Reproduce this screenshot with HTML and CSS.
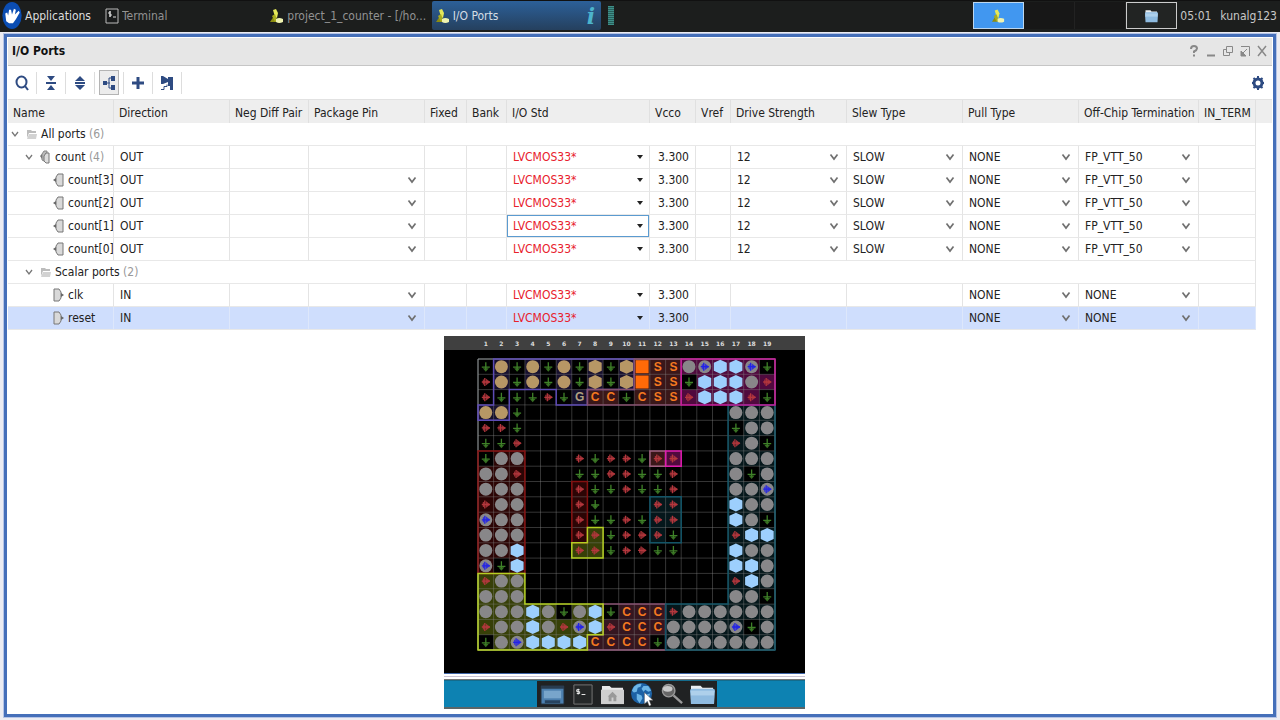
FILE: index.html
```html
<!DOCTYPE html>
<html lang="en">
<head>
<meta charset="utf-8">
<meta name="viewport" content="width=device-width, initial-scale=1">
<title>I/O Ports</title>
<link rel="stylesheet" href="styles.css">
</head>
<body>
<svg class="sprite" aria-hidden="true">
  <symbol id="leaf" viewBox="0 0 16 16"><path d="M1 14 5 8l3 6z" fill="#8b8c12"/><path d="M4 2 7 1l2 4-1 5-2-1z" fill="#e4e85a"/><path d="m3 8 3-2 2 6-2 2z" fill="#a9ac1e"/><path d="M7 11q3-2 7 0v3q-4 2-7 0z" fill="#f0f3b0"/></symbol>
  <symbol id="chevron" viewBox="0 0 10 8"><path d="m1.500 1.500 3.500 4.500 3.500-4.500" fill="none" stroke="#707070" stroke-width="1.700"/></symbol>
  <symbol id="thin-chevron" viewBox="0 0 8 8"><path d="m1 2 3 4 3-4" fill="none" stroke="#777" stroke-width="1.3"/></symbol>
  <symbol id="triangle" viewBox="0 0 10 8"><path d="M2 2h6L5 6z" fill="#222"/></symbol>
  <symbol id="folder" viewBox="0 0 11 12"><path d="M1 10V2h4l1 1h4v2H3z" fill="#bcbcbc"/><path d="M3 6h8l-1 5H1z" fill="#d2d2d2"/></symbol>
  <symbol id="out" viewBox="0 0 11 14"><path d="M10 1H5L3 4v6l2 3h5z" fill="#d9d9d9" stroke="#777"/><path d="M0 7l3-2v4z" fill="#666"/></symbol>
  <symbol id="in" viewBox="0 0 11 14"><path d="M1 1h5l2 3v6l-2 3H1z" fill="#d9d9d9" stroke="#777"/><path d="M11 7 8 5v4z" fill="#666"/></symbol>
  <symbol id="bus" viewBox="0 0 11 14"><path d="M7 1H4L2 4v6l2 1h3z" fill="#bbb" stroke="#888"/><path d="M9 3H6L4 6v5l2 2h3z" fill="#ddd" stroke="#777"/><path d="m0 6 2-2v5z" fill="#777"/></symbol>
  <symbol id="bluefolder" viewBox="0 0 26 22" preserveAspectRatio="none"><path d="M1 5V2h10l2 2h11v8H1z" fill="#e9edf0"/><path d="M0 7q0-2 2-2h22q2 0 2 2l-1 14H1z" fill="#8fbbe0"/><path d="M1 7h24v5H1z" fill="#aed0eb"/></symbol>
</svg>

<header class="panel">
  <button class="apps"><svg viewBox="0 0 22 28"><ellipse cx="11" cy="14" rx="10" ry="14" fill="#0b4db2"/><path d="M5 20 4 12l2-1 1 3 1-6 2 0 1 5 2-6 2 1-1 5 4-4 1 2-4 7-3 4H8z" fill="#fff"/></svg>Applications</button>
  <nav class="tasks" aria-label="Open windows">
    <button class="task"><svg viewBox="0 0 14 16"><path d="M1 1h12v14H1z" fill="#191b1b" stroke="#bbb"/><path d="M6 4H4v2h2v2H4M5 3v6M8 9h3" fill="none" stroke="#ddd"/></svg><span>Terminal</span></button>
    <button class="task"><svg><use href="#leaf"/></svg><span>project_1_counter - [/ho...</span></button>
    <button class="task active"><svg><use href="#leaf"/></svg><span>I/O Ports</span><i>i</i></button>
  </nav>
  <span class="meter"></span>
  <div class="pager">
    <button class="desk current" aria-label="Workspace 1"><svg><use href="#leaf"/></svg></button>
    <button class="desk" aria-label="Workspace 2"></button>
    <button class="desk" aria-label="Workspace 3"></button>
    <button class="desk boxed" aria-label="Files"><svg><use href="#bluefolder"/></svg></button>
  </div>
  <time>05:01</time>
  <span class="user">kunalg123</span>
</header>

<main class="window">
  <div class="titlebar">
    <h1>I/O Ports</h1>
    <button aria-label="Help"><svg viewBox="0 0 12 12"><path d="M3 4q0-3 3-3t3 2.500q0 1.500-3 3V8M6 9.500v2" fill="none"/></svg></button>
    <button aria-label="Minimize"><svg viewBox="0 0 12 12"><path d="M2 10.500h8"/></svg></button>
    <button aria-label="Restore"><svg viewBox="0 0 12 12" class="fine"><path d="M4.500 1.500h6v6h-6zM7.500 8v2.500h-6v-6H4"/></svg></button>
    <button aria-label="Float"><svg viewBox="0 0 12 12" class="fine"><path d="M2 1.500h8.500V11M8 4 3 9"/><path d="M2 6v5h5z" class="solid"/></svg></button>
    <button aria-label="Close"><svg viewBox="0 0 12 12" class="cross"><path d="m2 1 8 10M10 1 2 11"/></svg></button>
  </div>
  <div class="toolbar">
    <div class="slot"><button aria-label="Search"><svg viewBox="0 0 16 16"><ellipse cx="7.500" cy="7" rx="5" ry="5.500" fill="none"/><path d="m11 11 3 4"/></svg></button></div>
    <div class="slot"><button aria-label="Collapse all"><svg viewBox="0 0 16 16"><path d="M3 8h10" /><path class="solid" d="M4 1h8L8 6zM4 15h8l-4-5z"/></svg></button></div>
    <div class="slot"><button aria-label="Expand all"><svg viewBox="0 0 16 16"><path d="M3 8h10"/><path class="solid" d="M3 6h10L8 1zM3 10h10l-5 5z"/></svg></button></div>
    <div class="slot"><button class="on" aria-label="Group by interface"><svg viewBox="0 0 16 16"><path class="solid" d="M2 6h4v4H2zM10 1h4v5h-4zM10 10h4v5h-4z"/><path class="thin" d="M6 8h3M11 3H8v10h3" fill="none"/></svg></button></div>
    <div class="slot"><button aria-label="Add port"><svg viewBox="0 0 16 16"><path class="heavy" d="M8 2v12M2 8h12"/></svg></button></div>
    <div class="slot"><button aria-label="Schematic"><svg viewBox="0 0 16 16"><path class="solid" d="M2 1h2l5 3V2h5v13h-3v-4H9V7L4 9H2z"/><path class="thin" d="M2 14.500h3v-3h3v-2" fill="none"/></svg></button></div>
    <button class="gear" aria-label="Settings"><svg viewBox="0 0 16 16"><circle cx="8" cy="8" r="4" fill="none" class="heavy"/><path d="M8 1v3M8 12v3M2 8h2M12 8h2M3.500 3l2 2M10.500 11l2 2M12.500 3l-2 2M5.500 11l-2 2"/></svg></button>
  </div>

  <table class="ports">
    <colgroup>
      <col class="w-name"><col class="w-wide"><col class="w-pair"><col class="w-wide"><col class="w-fixed"><col class="w-bank"><col class="w-std"><col class="w-vcco"><col class="w-vref"><col class="w-wide"><col class="w-wide"><col class="w-wide"><col class="w-term"><col class="w-in"><col>
    </colgroup>
    <thead><tr><th>Name</th><th>Direction</th><th>Neg Diff Pair</th><th>Package Pin</th><th>Fixed</th><th>Bank</th><th>I/O Std</th><th>Vcco</th><th>Vref</th><th>Drive Strength</th><th>Slew Type</th><th>Pull Type</th><th>Off-Chip Termination</th><th>IN_TERM</th><th></th></tr></thead>
    <tbody id="rows"></tbody>
  </table>

  <div class="view">
  <figure class="device">
    <svg id="map" viewBox="0 0 361 337" role="img" aria-label="Package pin map"></svg>
    <div class="edge"></div>
    <div class="desktop">
      <div class="dock">
        <button aria-label="Show desktop"><svg viewBox="0 0 26 24"><path d="M1 3h24v19H1z" fill="#4c7fae" stroke="#232e38"/><path d="M1 3h24v3H1z" fill="#293c50"/><path d="M4 8h18v8H4z" fill="#78a5cb"/><path d="M5 18h16v3H5z" fill="#27435f"/></svg></button>
        <button aria-label="Terminal"><svg viewBox="0 0 26 24"><path d="M4 2h19v20H4z" fill="#252829" stroke="#777"/><path d="M10 7H7v2h3v2H7M8.500 6v6M12 12h4" fill="none" stroke="#eee"/></svg></button>
        <button aria-label="Home"><svg viewBox="0 0 26 24"><path d="M2 7V3h8l2 2h12v6H2z" fill="#e8e8e8"/><path d="M1 7h24v15H1z" fill="#cfcfcf"/><path d="m8 14 5-5 5 5h-1v5h-3v-4h-2v4H9v-5z" fill="#999"/></svg></button>
        <button aria-label="Web browser"><svg viewBox="0 0 26 24"><circle cx="12" cy="11" r="11" fill="#1d62a5"/><path d="M4 4q4-4 8-3l-1 3-3 1-1 4-3 1-2-2zM14 3l5 0 3 5-3 1-3-2-2 2-2-3zM7 11l5 2 1 3-3 5-3-4zM17 12l4-1-2 6-3 1z" fill="#6db6e6"/><path d="M15 10v12l3-3 2 5 2-1-2-5h4z" fill="#fff" stroke="#555" stroke-width=".5"/></svg></button>
        <button aria-label="Find"><svg viewBox="0 0 26 24"><path d="m14 13 9 8" stroke="#999" stroke-width="2.500"/><circle cx="9" cy="8" r="6.500" fill="#666" stroke="#999" stroke-width="1.500"/><ellipse cx="8" cy="6" rx="5" ry="3" fill="#c9c9c9"/></svg></button>
        <button aria-label="Files"><svg viewBox="0 0 26 22"><use href="#bluefolder"/></svg></button>
      </div>
    </div>
  </figure>
  </div>
</main>
<script src="app.js"></script>
</body>
</html>
```
FILE: styles.css
```css
* { box-sizing: border-box; }
body {
  margin: 0;
  min-height: 100vh;
  display: flex;
  flex-direction: column;
  background: #ececf2;
  color: #222;
  font: 12px/16px "DejaVu Sans Condensed", "DejaVu Sans", sans-serif;
}
button, select { font: inherit; color: inherit; border: 0; background: none; padding: 0; margin: 0; }
button { display: flex; align-items: center; justify-content: center; }
.sprite { position: absolute; width: 0; height: 0; }

/* Desktop panel */
.panel {
  display: flex;
  align-items: center;
  height: 32px;
  padding: 0 3px 2px 1px;
  background: #1c1e1d;
  border-top: 1px solid #111;
  color: #c8c8c8;
}
.apps { gap: 2px; width: 100px; justify-content: flex-start; color: #ddd; }
.apps svg { width: 22px; height: 27px; }
.tasks { display: flex; flex: 0 1 500px; min-width: 0; }
.task { flex: 1; min-width: 0; height: 29px; gap: 2px; padding: 0 2px 0 3px; justify-content: flex-start; color: #929292; border-radius: 2px; white-space: nowrap; }
.task svg { width: 16px; height: 16px; flex: none; }
.task span { flex: 1; text-align: left; overflow: hidden; }
.task.active { padding-right: 6px; background: linear-gradient(#2c6099, #25405e); color: #d5dde5; }
.task i { font: italic bold 22px/24px "DejaVu Serif", serif; color: #4cb4cc; }
.meter { width: 6px; height: 19px; margin-left: 7px; background: repeating-linear-gradient(#3e9089 0 1px, #28605c 1px 2px); }
.pager { display: flex; margin-left: auto; }
.desk { width: 51px; height: 27px; background: #171717; border-right: 1px solid #222; }
.desk svg { width: 15px; height: 16px; }
.desk.current { background: #4197f0; border: 1px solid #bcd6ee; }
.desk.boxed { background: #222423; border: 1px solid #ccc; }
.desk.boxed svg { width: 13px; height: 14px; }
time { width: 42px; padding-left: 3px; }
.user { padding-left: 1px; }

/* Window */
.window {
  flex: 1;
  display: flex;
  flex-direction: column;
  margin: 2px 4px 4px;
  padding: 1px;
  border: 3px solid #456fb9;
  background: #fff;
  background-clip: padding-box;
  outline: 1px solid #b5c4e6;
}
.titlebar { display: flex; align-items: center; height: 28px; padding: 0 2px 2px 4px; background: #e6e6e6; border-bottom: 1px solid #c6c6c6; }
h1 { margin: 0 auto 0 0; font-size: 12px; line-height: 16px; font-weight: bold; color: #111; }
.titlebar button { width: 17px; height: 20px; }
.titlebar svg { width: 12px; height: 12px; stroke: #888; stroke-width: 2; fill: none; }
.titlebar .fine { stroke-width: 1; }
.titlebar .cross { stroke-width: 1.5; }
.titlebar .solid { fill: #888; }
.toolbar { display: flex; align-items: center; height: 34px; border-bottom: 1px solid #e2e2e2; }
.slot { display: flex; justify-content: center; width: 29px; height: 22px; align-items: center; border-right: 1px solid #ddd; }
.toolbar button { width: 20px; height: 25px; flex: none; }
.toolbar button.on { background: #ececec; border: 1px solid #b4b4b4; }
.toolbar svg { width: 16px; height: 16px; flex: none; stroke: #2e4b82; stroke-width: 2; fill: #2e4b82; }
.toolbar .solid { stroke: none; }
.toolbar .thin { stroke-width: 1; }
.toolbar .heavy { stroke-width: 3; }
.toolbar .gear { margin-left: auto; margin-right: 4px; }

/* Port table */
.ports { width: 100%; table-layout: fixed; border-collapse: separate; border-spacing: 0; }
.w-name { width: 106px; }
.w-wide { width: 116px; }
.w-pair { width: 79px; }
.w-fixed { width: 42px; }
.w-bank { width: 40px; }
.w-std { width: 143px; }
.w-vcco { width: 46px; }
.w-vref { width: 35px; }
.w-term { width: 120px; }
.w-in { width: 57px; }
th, td { height: 23px; padding: 0 0 0 6px; text-align: left; font-weight: normal; white-space: nowrap; overflow: hidden; }
th { padding-top: 3px; padding-left: 5px; background: #eee; border-right: 1px solid #e0e0e0; }
td { border-right: 1px solid #e4e4e4; border-bottom: 1px solid #e8e8e8; }
th:last-child, td.filler { border: 0; }
td.number { padding: 0 6px 0 0; text-align: right; }
tr.selected td { background: #cfdefd; border-right-color: #dde7fb; }
tr.selected td.filler { background: none; }
td.name { padding: 0; }
.node { display: flex; align-items: center; padding-left: 3px; }
.level-1 { padding-left: 17px; }
.level-2 { padding-left: 45px; }
.node > svg { width: 11px; height: 14px; margin-right: 4px; flex: none; }
.node button { margin-right: 7px; }
.node button svg { width: 8px; height: 8px; }
.count { color: #999; }
.choice { display: flex; align-items: center; height: 22px; padding-right: 7px; }
.choice select { flex: 1; min-width: 0; appearance: none; outline: 0; height: 18px; }
.choice svg { width: 10px; height: 8px; flex: none; }
.std { color: #e8202c; }
.std .choice { padding-right: 4px; }
td.focused { box-shadow: inset 0 0 0 1px #5b9bd0; }

/* Device view */
.view { display: flex; justify-content: center; padding: 6px 31px 4px 0; }
.device { flex: 0 1 361px; min-width: 0; margin: 0; display: flex; flex-direction: column; }
#map { display: block; width: 100%; background: #000; }
#map text { text-anchor: middle; font-family: "DejaVu Sans", sans-serif; }
#map .label { font-size: 6px; font-weight: bold; fill: #ddd; }
#map .letter { font: bold 12px "Liberation Sans", sans-serif; fill: #f47920; }
#map .gnd { fill: #b0a080; }
.edge { height: 7px; background: linear-gradient(#3f66a8 0 1px, #fff 1px 3px, #c9c3d4 3px 4px, #fff 4px 6px, #777 6px 7px); }
.desktop { display: flex; justify-content: center; height: 29px; background: #0d82b2; border-top: 1px solid #146b8c; border-bottom: 2px solid #5c6668; }
.dock { display: flex; align-items: center; gap: 4px; width: 180px; margin-left: 5px; padding: 0 2px; background: #202223; }
.dock button { flex: 1; }
.dock svg { width: 25px; height: 23px; }
```
FILE: app.js
```js
const icon = (id) => `<svg aria-hidden="true"><use href="#${id}"/></svg>`;

const choice = (label, value, mark = "chevron") =>
  `<label class="choice"><select aria-label="${label}"><option>${value}</option></select>${icon(mark)}</label>`;

const group = (name, count, level) =>
  `<tr><td class="name" colspan="14"><div class="node level-${level}"><button aria-label="Collapse ${name}">${icon("thin-chevron")}</button>${icon("folder")}<span>${name} <span class="count">(${count})</span></span></div></td><td class="filler"></td></tr>`;

function port(p) {
  const out = p.dir === "OUT";
  const toggle = p.bus ? `<button aria-label="Collapse ${p.name}">${icon("thin-chevron")}</button>` : "";
  const shape = p.bus ? "bus" : out ? "out" : "in";
  const total = p.bus ? ` <span class="count">(${p.bus})</span>` : "";
  return `<tr class="${p.selected ? "selected" : ""}">
    <td class="name"><div class="node level-${p.bus ? 1 : 2}">${toggle}${icon(shape)}<span>${p.name}${total}</span></div></td>
    <td>${p.dir}</td><td></td>
    <td>${p.bus ? "" : choice("Package pin", "")}</td><td></td><td></td>
    <td class="std ${p.focused ? "focused" : ""}">${choice("I/O standard", "LVCMOS33*", "triangle")}</td>
    <td class="number">3.300</td><td></td>
    <td>${out ? choice("Drive strength", "12") : ""}</td>
    <td>${out ? choice("Slew type", "SLOW") : ""}</td>
    <td>${choice("Pull type", "NONE")}</td>
    <td>${choice("Off-chip termination", out ? "FP_VTT_50" : "NONE")}</td>
    <td></td><td class="filler"></td></tr>`;
}

document.getElementById("rows").innerHTML = [
  group("All ports", 6, 0),
  port({ name: "count", dir: "OUT", bus: 4 }),
  port({ name: "count[3]", dir: "OUT" }),
  port({ name: "count[2]", dir: "OUT" }),
  port({ name: "count[1]", dir: "OUT", focused: true }),
  port({ name: "count[0]", dir: "OUT" }),
  group("Scalar ports", 2, 1),
  port({ name: "clk", dir: "IN" }),
  port({ name: "reset", dir: "IN", selected: true }),
].join("");

// Package balls. g ground, r supply, o/h configuration, w user I/O,
// b differential, p clock capable, O/S/C/G dedicated.
const balls = [
  "gogogoghghOSSwpbbpg",
  "rogogoghghOSSgbbbwr",
  "rgggrgGCCgCSSrbbbrg",
  "oog.............www",
  "rrg.............gww",
  "ggr.............rwg",
  "gww...rgrrgrr...www",
  "wwr...ggrrggr...wgw",
  "www...rggrggr...wwp",
  "rww...rg...rr...bww",
  "pww...rggrgrr...bwg",
  "www...rrgrrrg...rbb",
  "wwb...rrgrrgg...bww",
  "pgb.............bbw",
  "rww.............rbw",
  "www.............wwg",
  "wwwbwgwbgCCCrwwwwww",
  "rwwbwrpbrCCCwwwwpgw",
  "gwpbbbbCCCCgwwwwwww",
];

// Bank outlines in cell units: stroke, fill, corner list.
const banks = [
  ["#5d4bb5", "#17102e", "1,0 10,0 10,2 7,2 7,3 5,3 5,2 2,2 2,4 0,4 0,3 1,3"],
  ["#85506f", "#3a1719", "10,0 13,0 13,3 7,3 7,2 10,2"],
  ["#85506f", "#351620", "8,16 12,16 12,19 7,19 7,18 8,18"],
  ["#125467", "#05171b", "16,3 19,3 19,19 12,19 12,16 16,16"],
  ["#c81a9c", "#500a3e", "13,0 19,0 19,3 13,3"],
  ["#851010", "#2c0505", "0,6 3,6 3,14 0,14"],
  ["#b4d022", "#374008", "0,14 3,14 3,16 8,16 8,18 7,18 7,19 0,19"],
  ["#a06080", "#3a1719", "11,6 12,6 12,7 11,7"],
  ["#e01ab0", "#500a3e", "12,6 13,6 13,7 12,7"],
  ["#851010", "#2c0505", "6,8 7,8 7,12 6,12"],
  ["#b4d022", "#374008", "7,11 8,11 8,13 6,13 6,12 7,12"],
  ["#125467", "#05171b", "11,9 13,9 13,12 11,12"],
];

const left = 34, top0 = 23, size = 19;
const cw = 297 / size, ch = 291 / size;
const X = (c) => (left + c * cw).toFixed(1);
const Y = (r) => (top0 + r * ch).toFixed(1);
const points = (list) => list.split(" ").map((p) => p.split(",")).map(([c, r]) => `${X(+c)},${Y(+r)}`).join(" ");

const hex = (fill) => `<path d="M0-7 6.500-4V4L0 7-6.500 4V-4z" fill="${fill}"/>`;
const disc = (fill) => `<circle r="6.5" fill="${fill}"/>`;
const arrow = (color) => `<path d="M-4 0h8M-1-4v8" stroke="${color}" stroke-width="1.3" fill="none"/><path d="M-3-2.500h1.200v5H-3zM0-3.500 4.500 0 0 3.500z" fill="${color}" opacity=".85"/>`;
const shapes = {
  g: `<path d="M0-4.500v7M-4 0.500h8" stroke="#3f8128" stroke-width="1.3" fill="none"/><path d="M-3 1.500h6L0 5z" fill="#3f8128" opacity=".85"/>`,
  r: arrow("#b5373d"),
  o: disc("#b79765"),
  h: hex("#b79765"),
  w: disc("#888789"),
  b: hex("#9dcffd"),
  p: disc("#888789") + arrow("#2222e8"),
  O: `<path d="M-6.500-6.500h13v13h-13z" fill="#ff6a08"/>`,
};

let art = `<rect width="361" height="14" fill="#404040"/>`;
for (let i = 0; i < size; i++) art += `<text class="label" x="${X(i + 0.5)}" y="10">${i + 1}</text>`;
for (const [, fill, list] of banks) art += `<polygon points="${points(list)}" fill="${fill}"/>`;
balls.forEach((row, r) => [...row].forEach((code, c) => {
  if (code === "g") art += `<rect x="${X(c)}" y="${Y(r)}" width="${cw}" height="${ch}" fill="#000"/>`;
}));
for (let i = 0; i <= size; i++) {
  art += `<path d="M${X(i)} ${Y(0)}V${Y(size)}M${X(0)} ${Y(i)}H${X(size)}" stroke="#858585" stroke-opacity=".4" fill="none"/>`;
}
art += `<path d="M${X(0)} ${Y(size)}V${Y(0)}H${X(size)}V${Y(size)}z" stroke="#8c9294" fill="none"/>`;
for (const [stroke, , list] of banks) art += `<polygon points="${points(list)}" fill="none" stroke="${stroke}" stroke-width="1.5"/>`;
balls.forEach((row, r) => [...row].forEach((code, c) => {
  if (shapes[code]) art += `<g transform="translate(${X(c + 0.5)} ${Y(r + 0.5)})">${shapes[code]}</g>`;
  else if (code !== ".") art += `<text class="letter${code === "G" ? " gnd" : ""}" x="${X(c + 0.5)}" y="${(top0 + (r + 0.5) * ch + 4).toFixed(1)}">${code}</text>`;
}));
document.getElementById("map").innerHTML = art;
```
